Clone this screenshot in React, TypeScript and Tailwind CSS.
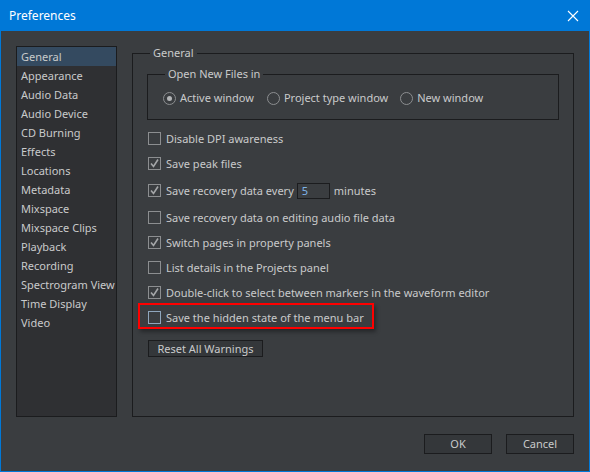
import React from 'react';

const font = { fontFamily: '"Noto Sans", "Open Sans", sans-serif' };

const pages = [
  'General',
  'Appearance',
  'Audio Data',
  'Audio Device',
  'CD Burning',
  'Effects',
  'Locations',
  'Metadata',
  'Mixspace',
  'Mixspace Clips',
  'Playback',
  'Recording',
  'Spectrogram View',
  'Time Display',
  'Video',
];

const Checkbox = ({ checked, focused }: { checked?: boolean; focused?: boolean }) => (
  <span
    className={`flex h-[13px] w-[13px] shrink-0 items-center justify-center border ${
      focused ? 'border-[#8fa6bd]' : 'border-[#8c8e90]'
    }`}
  >
    {checked && (
      <svg width="11" height="11" viewBox="0 0 11 11">
        <path d="M2 5.5 L4.5 8.5 L9 1.5" fill="none" stroke="#a4a6a8" strokeWidth="1.6" />
      </svg>
    )}
  </span>
);

const Radio = ({ checked }: { checked?: boolean }) => (
  <span className="flex h-[13px] w-[13px] shrink-0 items-center justify-center rounded-full border border-[#8c8e90]">
    {checked && <span className="h-[5px] w-[5px] rounded-full bg-[#b4b6b8]" />}
  </span>
);

const CheckRow = ({ label, checked }: { label: string; checked?: boolean }) => (
  <div className="flex h-[25px] items-center gap-[5px] pl-[1px]">
    <Checkbox checked={checked} />
    <span>{label}</span>
  </div>
);

export default function App() {
  return (
    <div
      className="flex h-[472px] w-[590px] flex-col whitespace-nowrap border-x border-b border-[#0078d7] bg-[#3a3d40] text-[11px] leading-[14px] text-[#c9cacb]"
      style={font}
    >
      {/* Title bar */}
      <div className="-mx-px flex h-[31px] shrink-0 items-center justify-between bg-[#0078d7] pl-[9px] pr-[11px] text-white">
        <span className="text-[12px]">Preferences</span>
        <svg width="12" height="12" viewBox="0 0 12 12">
          <path d="M1 1 L11 11 M11 1 L1 11" stroke="#ffffff" strokeWidth="1.1" />
        </svg>
      </div>

      <div className="flex flex-1 flex-col px-[15px] pt-[15px]">
        <div className="flex h-[371px] gap-[15px]">
          {/* Page list */}
          <div className="w-[101px] shrink-0 border border-[#1b1c1e] bg-[#2f3033]">
            {pages.map((p, i) => (
              <div
                key={p}
                className={`flex h-[19px] items-center pl-[4px] ${i === 0 ? 'bg-[#344a60]' : ''}`}
              >
                {p}
              </div>
            ))}
          </div>

          {/* General group */}
          <fieldset className="flex-1 border border-[#1b1c1e] px-[14px]">
            <legend className="ml-[3px] px-[3px] leading-[14px]">General</legend>

            <fieldset className="mt-[7px] border border-[#1b1c1e] pb-[13px] pl-[15px] pt-[9px]">
              <legend className="ml-[2px] px-[3px] leading-[14px]">Open New Files in</legend>
              <div className="flex h-[16px] items-center">
                <Radio checked />
                <span className="ml-[4px]">Active window</span>
                <span className="ml-[13px]">
                  <Radio />
                </span>
                <span className="ml-[4px]">Project type window</span>
                <span className="ml-[12px]">
                  <Radio />
                </span>
                <span className="ml-[4px]">New window</span>
              </div>
            </fieldset>

            <div className="mt-[6px]">
              <CheckRow label="Disable DPI awareness" />
              <CheckRow label="Save peak files" checked />
              <div className="flex h-[29px] items-center gap-[5px] pl-[1px]">
                <Checkbox checked />
                <span>Save recovery data every</span>
                <span className="ml-[-2px] flex h-[16px] w-[33px] items-center border border-[#1b1c1e] pl-[4px] text-[#7db3e8]">
                  5
                </span>
                <span className="ml-[-1px]">minutes</span>
              </div>
              <CheckRow label="Save recovery data on editing audio file data" />
              <CheckRow label="Switch pages in property panels" checked />
              <CheckRow label="List details in the Projects panel" />
              <CheckRow label="Double-click to select between markers in the waveform editor" checked />
              <div className="relative flex h-[25px] items-center gap-[5px] pl-[1px]">
                <Checkbox focused />
                <span>Save the hidden state of the menu bar</span>
                <div className="pointer-events-none absolute left-[-9px] top-[-2px] h-[26px] w-[236px] border-2 border-[#ff0000] shadow-[2px_3px_4px_rgba(0,0,0,0.35)]" />
              </div>
            </div>

            <button className="ml-[1px] mt-[10px] flex h-[17px] w-[115px] items-center justify-center border border-[#1b1c1e] bg-[#34373a] text-[#c9cacb]">
              Reset All Warnings
            </button>
          </fieldset>
        </div>

        {/* Dialog buttons */}
        <div className="mt-[17px] flex justify-end gap-[14px]">
          <button className="flex h-[20px] w-[68px] items-center justify-center border border-[#1b1c1e] bg-[#34373a] text-[#c9cacb]">
            OK
          </button>
          <button className="flex h-[20px] w-[68px] items-center justify-center border border-[#1b1c1e] bg-[#34373a] text-[#c9cacb]">
            Cancel
          </button>
        </div>
      </div>
    </div>
  );
}
